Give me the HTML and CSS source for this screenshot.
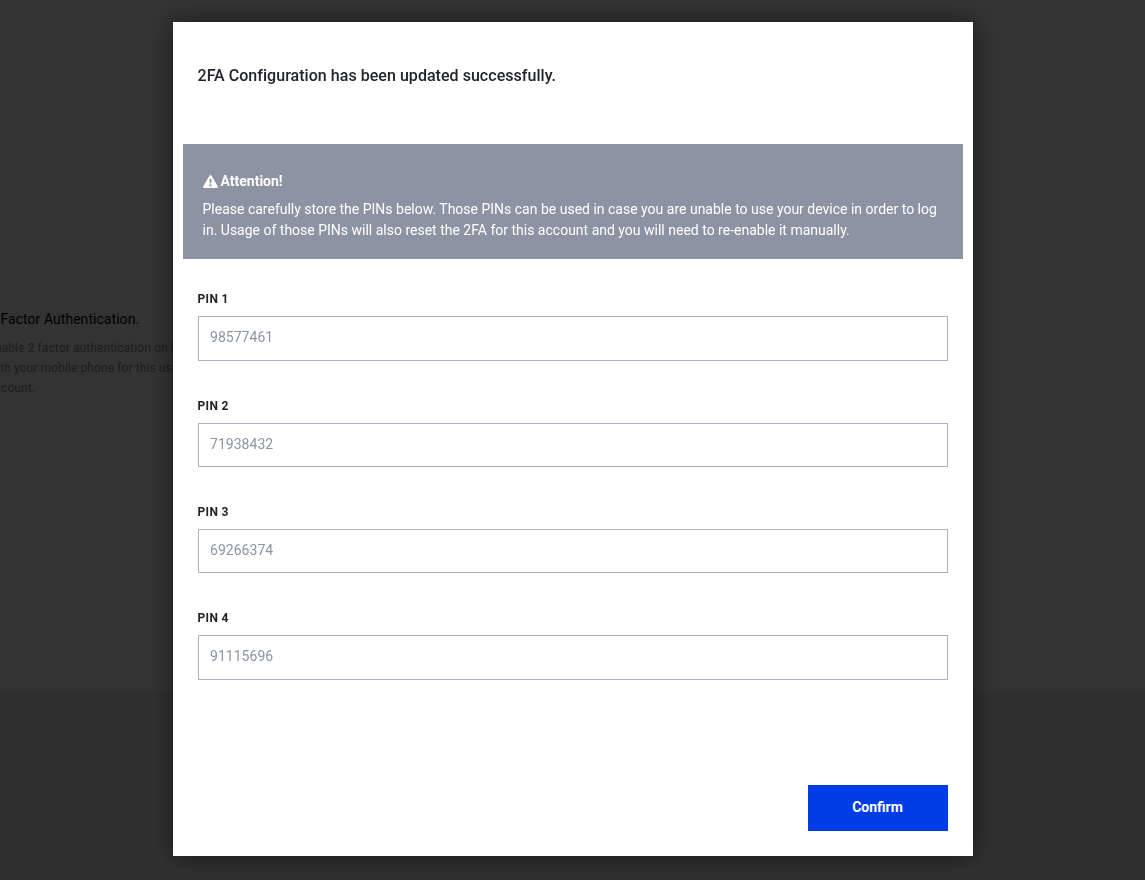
FILE: index.html
```html
<!DOCTYPE html>
<html lang="en">

<head>
    <meta charset="UTF-8">
    <meta name="viewport" content="width=device-width, initial-scale=1.0">
    <title>2FA Configuration</title>
    <link rel="stylesheet" href="styles.css">
</head>

<body>
    <div class="page">
        <div class="page-main">
            <div class="tfa-info">
                <h3>2 Factor Authentication.</h3>
                <p>Enable 2 factor authentication on login with your mobile phone for this user account.</p>
            </div>
        </div>
        <div class="page-footer"></div>
    </div>

    <div class="overlay">
        <div class="modal">
            <h2 class="modal-title">2FA Configuration has been updated successfully.</h2>

            <div class="alert">
                <div class="alert-title">
                    <svg class="alert-icon" viewBox="0 0 16 14" aria-hidden="true">
                        <path fill-rule="evenodd" d="M8 0c.5 0 .9.25 1.15.7l6.6 11.5c.5.85-.1 1.8-1.1 1.8H1.35c-1 0-1.6-.95-1.1-1.8L6.85.7C7.1.25 7.5 0 8 0zM6.9 4.3l.3 4.9h1.6l.3-4.9H6.9zM8 10a1.2 1.2 0 1 0 0 2.4A1.2 1.2 0 0 0 8 10z" />
                    </svg>
                    Attention!
                </div>
                <p>Please carefully store the PINs below. Those PINs can be used in case you are unable to use your device in order to log in. Usage of those PINs will also reset the 2FA for this account and you will need to re-enable it manually.</p>
            </div>

            <div class="pins">
                <div class="field">
                    <label for="pin1">PIN 1</label>
                    <input type="text" id="pin1" placeholder="98577461" readonly>
                </div>
                <div class="field">
                    <label for="pin2">PIN 2</label>
                    <input type="text" id="pin2" placeholder="71938432" readonly>
                </div>
                <div class="field">
                    <label for="pin3">PIN 3</label>
                    <input type="text" id="pin3" placeholder="69266374" readonly>
                </div>
                <div class="field">
                    <label for="pin4">PIN 4</label>
                    <input type="text" id="pin4" placeholder="91115696" readonly>
                </div>
            </div>

            <div class="modal-actions">
                <button class="confirm">Confirm</button>
            </div>
        </div>
    </div>
</body>

</html>
```

FILE: styles.css
```css
* {
    box-sizing: border-box;
}

html,
body {
    height: 100%;
}

body {
    margin: 0;
    overflow: hidden;
    font-family: Roboto, "Liberation Sans", sans-serif;
    background: #f0f0f0;
    color: #212529;
}

.page-main {
    height: 691px;
    background: #ffffff;
    padding-top: 310px;
}

.page-footer {
    height: 189px;
    background: #ececec;
}

.tfa-info {
    width: 230px;
    margin-left: -12px;
}

.tfa-info h3 {
    margin: 0 0 9.5px;
    padding-left: 1px;
    font-size: 14px;
    line-height: 18px;
    font-weight: 400;
    letter-spacing: 0.05px;
    color: #000;
}

.tfa-info p {
    margin: 0;
    font-size: 12px;
    line-height: 20px;
    letter-spacing: 0.1px;
    color: #8c93a3;
}

.overlay {
    position: fixed;
    top: 0;
    left: 0;
    right: 0;
    bottom: 0;
    background: rgba(0, 0, 0, 0.8);
    display: flex;
    justify-content: center;
    align-items: flex-start;
}

.modal {
    width: 800px;
    height: 834px;
    margin-top: 22px;
    background: #fff;
    padding: 0 10px;
    box-shadow: 0 0 24px rgba(0, 0, 0, 0.5);
    display: flex;
    flex-direction: column;
}

.modal-title {
    margin: 0;
    padding: 44px 15px 0;
    height: 122px;
    font-size: 16px;
    line-height: 19px;
    font-weight: 500;
    letter-spacing: 0.04px;
    color: #212529;
}

.alert {
    height: 115px;
    padding: 27px 20px 0;
    background: #8c93a3;
    color: #fff;
    font-size: 14px;
    line-height: 21px;
}

.alert-title {
    display: flex;
    align-items: center;
    gap: 3px;
    font-weight: 700;
    height: 20px;
    margin-bottom: 8px;
}

.alert-icon {
    width: 15px;
    height: 13px;
    fill: #fff;
}

.alert p {
    margin: 0;
}

.pins {
    padding: 32.3px 15px 0;
    display: flex;
    flex-direction: column;
    gap: 36.8px;
}

.field label {
    display: block;
    font-size: 12px;
    line-height: 16px;
    font-weight: 700;
    letter-spacing: 0.35px;
    margin-bottom: 9.1px;
}

.field input {
    display: block;
    width: 100%;
    height: 44.4px;
    padding: 0 11.5px 2.5px;
    border: 1px solid #aeb2bd;
    border-radius: 0;
    outline: none;
    font-family: inherit;
    font-size: 14px;
    letter-spacing: 0.03px;
    background: #fff;
}

.field input::placeholder {
    color: #8c93a3;
    opacity: 1;
}

.modal-actions {
    margin-top: auto;
    padding: 0 15px 25px;
    display: flex;
    justify-content: flex-end;
}

.confirm {
    width: 140px;
    height: 46px;
    padding: 0 0 2px;
    border: 0;
    background: #003de6;
    color: #fff;
    font-family: inherit;
    font-size: 14px;
    font-weight: 700;
    cursor: pointer;
}
```
